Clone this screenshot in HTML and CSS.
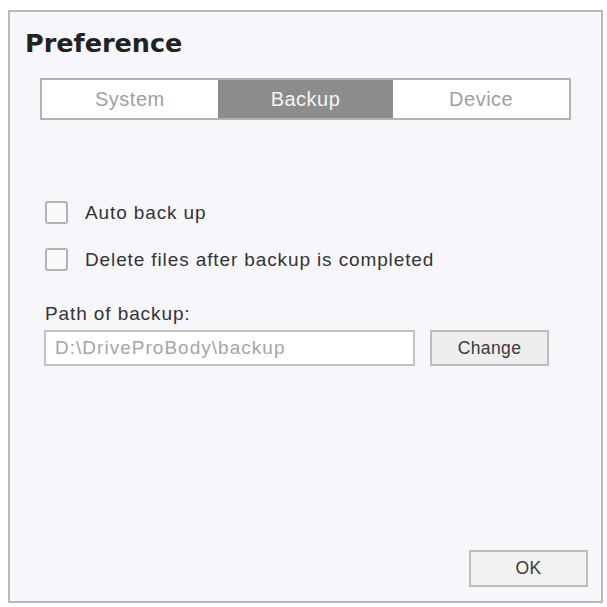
FILE: index.html
```html
<!DOCTYPE html>
<html>
<head>
<meta charset="utf-8">
<link rel="stylesheet" href="styles.css">
</head>
<body>
<div class="dialog">
  <h1 class="title">Preference</h1>
  <div class="tabs">
    <div class="tab">System</div>
    <div class="tab active">Backup</div>
    <div class="tab">Device</div>
  </div>
  <div class="options">
    <label class="check"><span class="box"></span><span>Auto back up</span></label>
    <label class="check"><span class="box"></span><span>Delete files after backup is completed</span></label>
  </div>
  <div class="path-label">Path of backup:</div>
  <div class="path-row">
    <div class="path-input">D:\DriveProBody\backup</div>
    <div class="btn change">Change</div>
  </div>
  <div class="footer">
    <div class="btn ok">OK</div>
  </div>
</div>
</body>
</html>
```
FILE: styles.css
```css
html, body { margin: 0; padding: 0; background: #ffffff; }
body {
  font-family: "Liberation Sans", Arial, sans-serif;
  width: 607px; height: 607px;
  padding: 10px 0 0 8px;
  box-sizing: border-box;
}
.dialog {
  width: 595px; height: 593px;
  box-sizing: border-box;
  border: 2px solid #b9b9bc;
  background: #f7f7fb;
  display: flex; flex-direction: column;
}
.title {
  margin: 17px 0 0 15px;
  font-family: "DejaVu Sans", "Liberation Sans", sans-serif;
  font-size: 25.5px; font-weight: bold; color: #222222;
  line-height: 28px;
}
.tabs {
  margin: 21px 0 0 30px;
  width: 531px; height: 42px;
  box-sizing: border-box;
  border: 2px solid #b3b3b3;
  display: flex;
  background: #ffffff;
}
.tab {
  flex: 1; display: flex; align-items: center; justify-content: center;
  font-size: 20px; letter-spacing: 0.5px; color: #a0a0a0;
}
.tab.active { background: #8c8c8c; color: #f4f4f4; }
.options {
  margin: 81px 0 0 35px;
  display: flex; flex-direction: column; gap: 24px;
}
.check {
  display: flex; align-items: center; gap: 17px;
  font-size: 19px; letter-spacing: 0.88px; color: #333;
}
.box {
  width: 23px; height: 23px; box-sizing: border-box;
  border: 2px solid #b3b3b3; border-radius: 3px; background: #fafafa;
}
.path-label {
  margin: 33px 0 0 35px;
  font-size: 19px; letter-spacing: 0.9px; color: #333; line-height: 20px;
}
.path-row { margin: 6px 0 0 34px; display: flex; gap: 15px; }
.path-input {
  width: 371px; height: 36px; box-sizing: border-box;
  border: 2px solid #c2c2c2; background: #fff;
  font-size: 19px; letter-spacing: 1.02px; color: #a6a6a6;
  display: flex; align-items: center; padding-left: 9px;
}
.btn {
  box-sizing: border-box; height: 36px; width: 119px;
  border: 2px solid #bdbdbd; background: #eeeeee;
  display: flex; align-items: center; justify-content: center;
  font-size: 17.5px; letter-spacing: 0.4px; color: #3a3a3a;
}
.footer { margin-top: auto; display: flex; justify-content: flex-end; padding: 0 13px 14px 0; }
.ok { height: 37px; background: #f2f2f2; }
```
